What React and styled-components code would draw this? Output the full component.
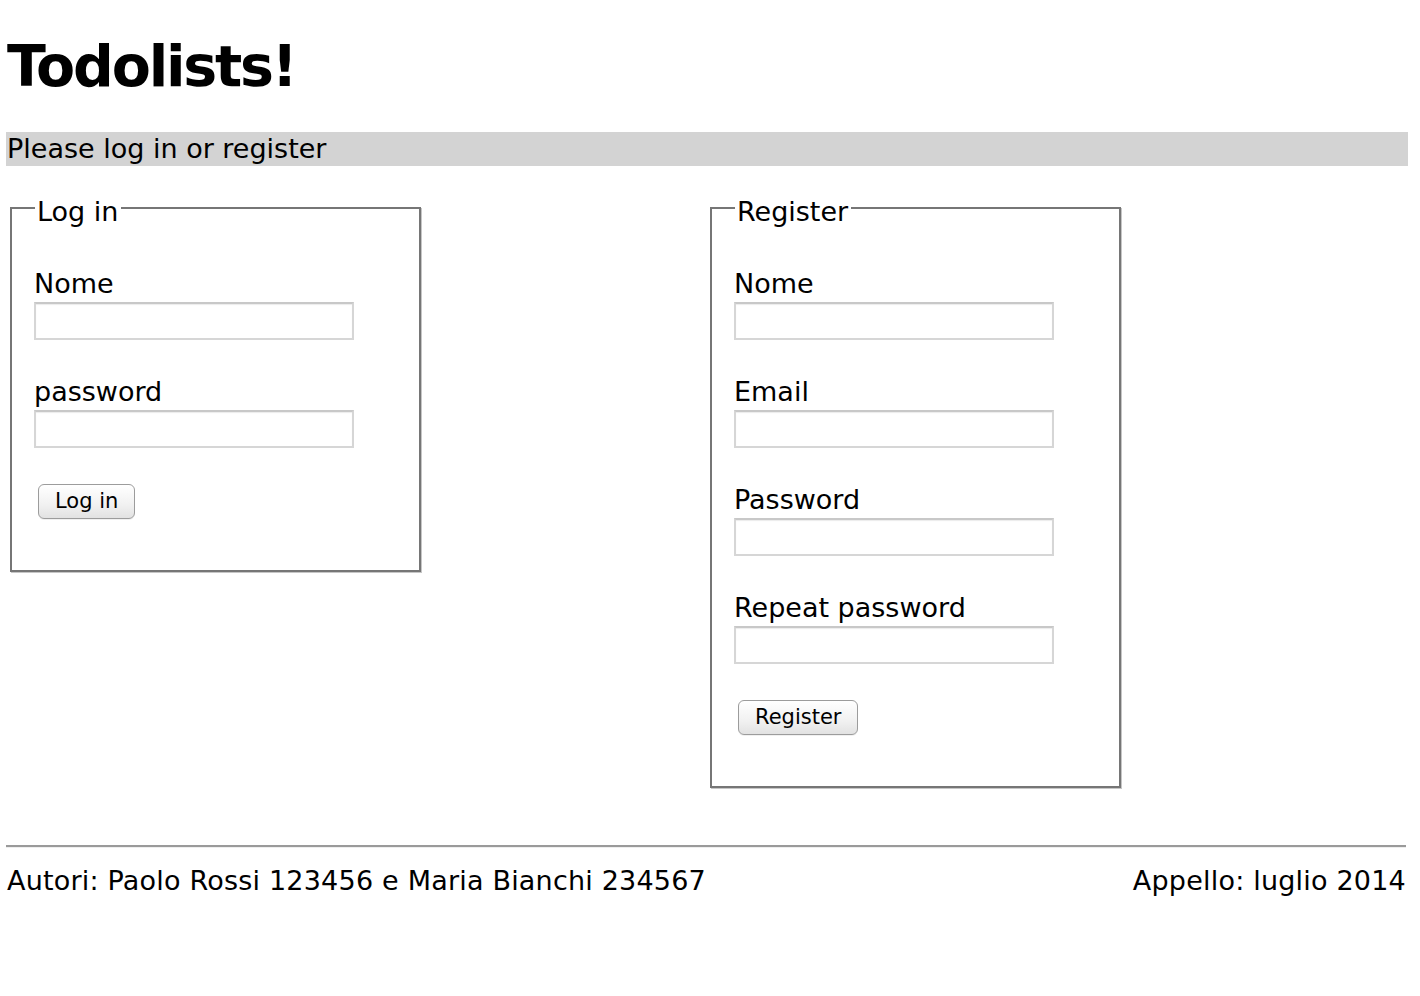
import React from 'react';
import styled, { createGlobalStyle } from 'styled-components';

const GlobalStyle = createGlobalStyle`
  html, body {
    margin: 0;
    padding: 0;
    background: #ffffff;
  }

  body {
    font-family: "DejaVu Sans", "Liberation Sans", sans-serif;
    color: #000000;
  }
`;

const Page = styled.div`
  padding: 0 14px 0 6px;
  font-size: 27px;
`;

const Title = styled.h1`
  margin: 0;
  padding: 28px 0 0 1px;
  font-size: 57px;
  font-weight: 700;
  line-height: 76px;
  letter-spacing: -2.2px;
`;

const Notice = styled.div`
  margin: 28px -2px 0 0;
  padding-left: 1px;
  height: 34px;
  line-height: 34px;
  background-color: #d3d3d3;
`;

const Columns = styled.div`
  display: grid;
  grid-template-columns: 1fr 1fr;
  align-items: start;
  margin-top: 22px;
`;

const Fieldset = styled.fieldset`
  width: 363px;
  margin: 0 0 0 4px;
  padding: 39px 22px 51px 22px;
  border: 2px solid #767676;
  box-shadow: 1px 1px 0 #c6c6c6;
`;

const Legend = styled.legend`
  margin-left: 1px;
  padding: 8px 3px 0 2px;
  line-height: 32px;
`;

const Label = styled.label`
  display: block;
  line-height: 33px;
  margin-top: ${props => props.first ? '0' : '35px'};
`;

const Input = styled.input`
  display: block;
  box-sizing: border-box;
  width: 320px;
  height: 38px;
  margin: 2px 0 0 0;
  border: 2px solid #d6d6d6;
  border-top-color: #c8c8c8;
  box-shadow: inset 0 1px 1px rgba(0, 0, 0, 0.08);
  background: #ffffff;
  font: inherit;
`;

const Button = styled.button`
  display: block;
  box-sizing: border-box;
  height: 35px;
  margin: 36px 0 0 4px;
  padding: 0 16px;
  border: 1px solid #9c9c9c;
  border-radius: 6px;
  background: linear-gradient(#ffffff, #f1f1f1 60%, #e2e2e2);
  box-shadow: 0 1px 0 rgba(0, 0, 0, 0.06);
  color: #000000;
  font-family: "DejaVu Sans", "Liberation Sans", sans-serif;
  font-size: 21px;
  line-height: 33px;
`;

const Footer = styled.footer`
  margin-top: 57px;
`;

const Rule = styled.hr`
  margin: 0;
  height: 0;
  border: 0;
  border-top: 2px solid #9a9a9a;
  border-bottom: 1px solid #eeeeee;
`;

const FooterRow = styled.div`
  display: flex;
  justify-content: space-between;
  padding: 0 0 0 1px;
  margin-top: 16px;
  line-height: 34px;
  letter-spacing: 0.2px;
`;

const Field = ({ label, type = 'text', first }) => (
  <>
    <Label first={first}>{label}</Label>
    <Input type={type} />
  </>
);

export default function App() {
  return (
    <Page>
      <GlobalStyle />
      <Title>Todolists!</Title>
      <Notice>Please log in or register</Notice>
      <Columns>
        <div>
          <Fieldset>
            <Legend>Log in</Legend>
            <Field label="Nome" first />
            <Field label="password" type="password" />
            <Button type="button">Log in</Button>
          </Fieldset>
        </div>
        <div>
          <Fieldset>
            <Legend>Register</Legend>
            <Field label="Nome" first />
            <Field label="Email" type="email" />
            <Field label="Password" type="password" />
            <Field label="Repeat password" type="password" />
            <Button type="button">Register</Button>
          </Fieldset>
        </div>
      </Columns>
      <Footer>
        <Rule />
        <FooterRow>
          <span>Autori: Paolo Rossi 123456 e Maria Bianchi 234567</span>
          <span>Appello: luglio 2014</span>
        </FooterRow>
      </Footer>
    </Page>
  );
}
